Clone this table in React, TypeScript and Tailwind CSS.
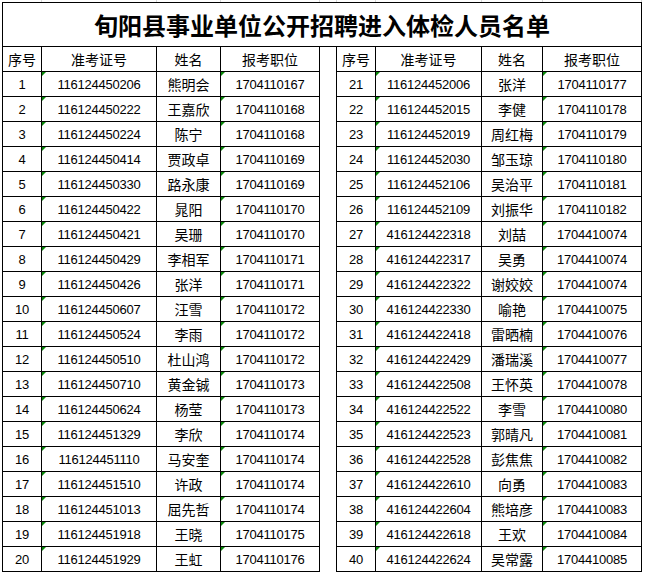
import React from "react";

type Row = [string, string, string, string];

const left: Row[] = [
  ["1", "116124450206", "熊明会", "1704110167"],
  ["2", "116124450222", "王嘉欣", "1704110168"],
  ["3", "116124450224", "陈宁", "1704110168"],
  ["4", "116124450414", "贾政卓", "1704110169"],
  ["5", "116124450330", "路永康", "1704110169"],
  ["6", "116124450422", "晁阳", "1704110170"],
  ["7", "116124450421", "吴珊", "1704110170"],
  ["8", "116124450429", "李相军", "1704110171"],
  ["9", "116124450426", "张洋", "1704110171"],
  ["10", "116124450607", "汪雪", "1704110172"],
  ["11", "116124450524", "李雨", "1704110172"],
  ["12", "116124450510", "杜山鸿", "1704110172"],
  ["13", "116124450710", "黄金铖", "1704110173"],
  ["14", "116124450624", "杨莹", "1704110173"],
  ["15", "116124451329", "李欣", "1704110174"],
  ["16", "116124451110", "马安奎", "1704110174"],
  ["17", "116124451510", "许政", "1704110174"],
  ["18", "116124451013", "屈先哲", "1704110174"],
  ["19", "116124451918", "王晓", "1704110175"],
  ["20", "116124451929", "王虹", "1704110176"],
];

const right: Row[] = [
  ["21", "116124452006", "张洋", "1704110177"],
  ["22", "116124452015", "李健", "1704110178"],
  ["23", "116124452019", "周红梅", "1704110179"],
  ["24", "116124452030", "邹玉琼", "1704110180"],
  ["25", "116124452106", "吴治平", "1704110181"],
  ["26", "116124452109", "刘振华", "1704110182"],
  ["27", "416124422318", "刘喆", "1704410074"],
  ["28", "416124422317", "吴勇", "1704410074"],
  ["29", "416124422322", "谢姣姣", "1704410074"],
  ["30", "416124422330", "喻艳", "1704410075"],
  ["31", "416124422418", "雷晒楠", "1704410076"],
  ["32", "416124422429", "潘瑞溪", "1704410077"],
  ["33", "416124422508", "王怀英", "1704410078"],
  ["34", "416124422522", "李雪", "1704410080"],
  ["35", "416124422523", "郭晴凡", "1704410081"],
  ["36", "416124422528", "彭焦焦", "1704410082"],
  ["37", "416124422610", "向勇", "1704410083"],
  ["38", "416124422604", "熊培彦", "1704410083"],
  ["39", "416124422618", "王欢", "1704410084"],
  ["40", "416124422624", "吴常露", "1704410085"],
];

// column widths include each cell's right border (Excel-like 1px grid)
const W = [
  "w-[39px]",
  "w-[115px]",
  "w-[64px]",
  "w-[99px]",
  "w-[17px]",
  "w-[39px]",
  "w-[106px]",
  "w-[61px]",
  "w-[99px]",
];

const num = "font-['Liberation_Sans','Noto_Sans_CJK_SC',sans-serif] text-[13px] tracking-[-0.25px]";
const han = "font-['Noto_Sans_CJK_SC',sans-serif] text-[14px]";
const cell =
  "relative shrink-0 h-full flex items-center justify-center border-r border-b border-black leading-none text-black";

// green "number stored as text" marker
function Flag() {
  return (
    <span className="absolute left-0 top-0 w-0 h-0 border-t-[4px] border-r-[4px] border-t-[#0a8a0a] border-r-transparent" />
  );
}

function Half({ r, offset }: { r: Row; offset: number }) {
  return (
    <>
      <div className={`${cell} ${W[offset]} ${num}`}>{r[0]}</div>
      <div className={`${cell} ${W[offset + 1]} ${num}`}>
        <Flag />
        {r[1]}
      </div>
      <div className={`${cell} ${W[offset + 2]} ${han}`}>{r[2]}</div>
      <div className={`${cell} ${W[offset + 3]} ${num}`}>
        <Flag />
        {r[3]}
      </div>
    </>
  );
}

const heads = ["序号", "准考证号", "姓名", "报考职位"];

export default function App() {
  return (
    <div className="w-[645px] h-[573px] bg-white overflow-hidden">
      {/* faint sheet gridlines above the table */}
      <div className="flex h-[2px] pl-[3px]">
        {W.map((w, i) => (
          <div key={i} className={`${w} h-full shrink-0 border-r border-[#d9d9d9]`} />
        ))}
      </div>
      <div className="ml-[2px] w-[640px] border-l border-t border-black">
        <div className="h-[44px] flex items-center justify-center border-r border-b border-black font-['Noto_Sans_CJK_SC',sans-serif] text-[24px] font-bold leading-none text-black">
          旬阳县事业单位公开招聘进入体检人员名单
        </div>
        <div className="flex h-[25px]">
          {heads.map((h, i) => (
            <div key={i} className={`${cell} ${W[i]} ${han}`}>
              {h}
            </div>
          ))}
          <div className={`shrink-0 h-full border-r border-black ${W[4]}`} />
          {heads.map((h, i) => (
            <div key={i} className={`${cell} ${W[i + 5]} ${han}`}>
              {h}
            </div>
          ))}
        </div>
        {left.map((r, i) => (
          <div key={i} className="flex h-[25px]">
            <Half r={r} offset={0} />
            <div className={`shrink-0 h-full border-r border-black ${W[4]}`} />
            <Half r={right[i]} offset={5} />
          </div>
        ))}
      </div>
    </div>
  );
}
